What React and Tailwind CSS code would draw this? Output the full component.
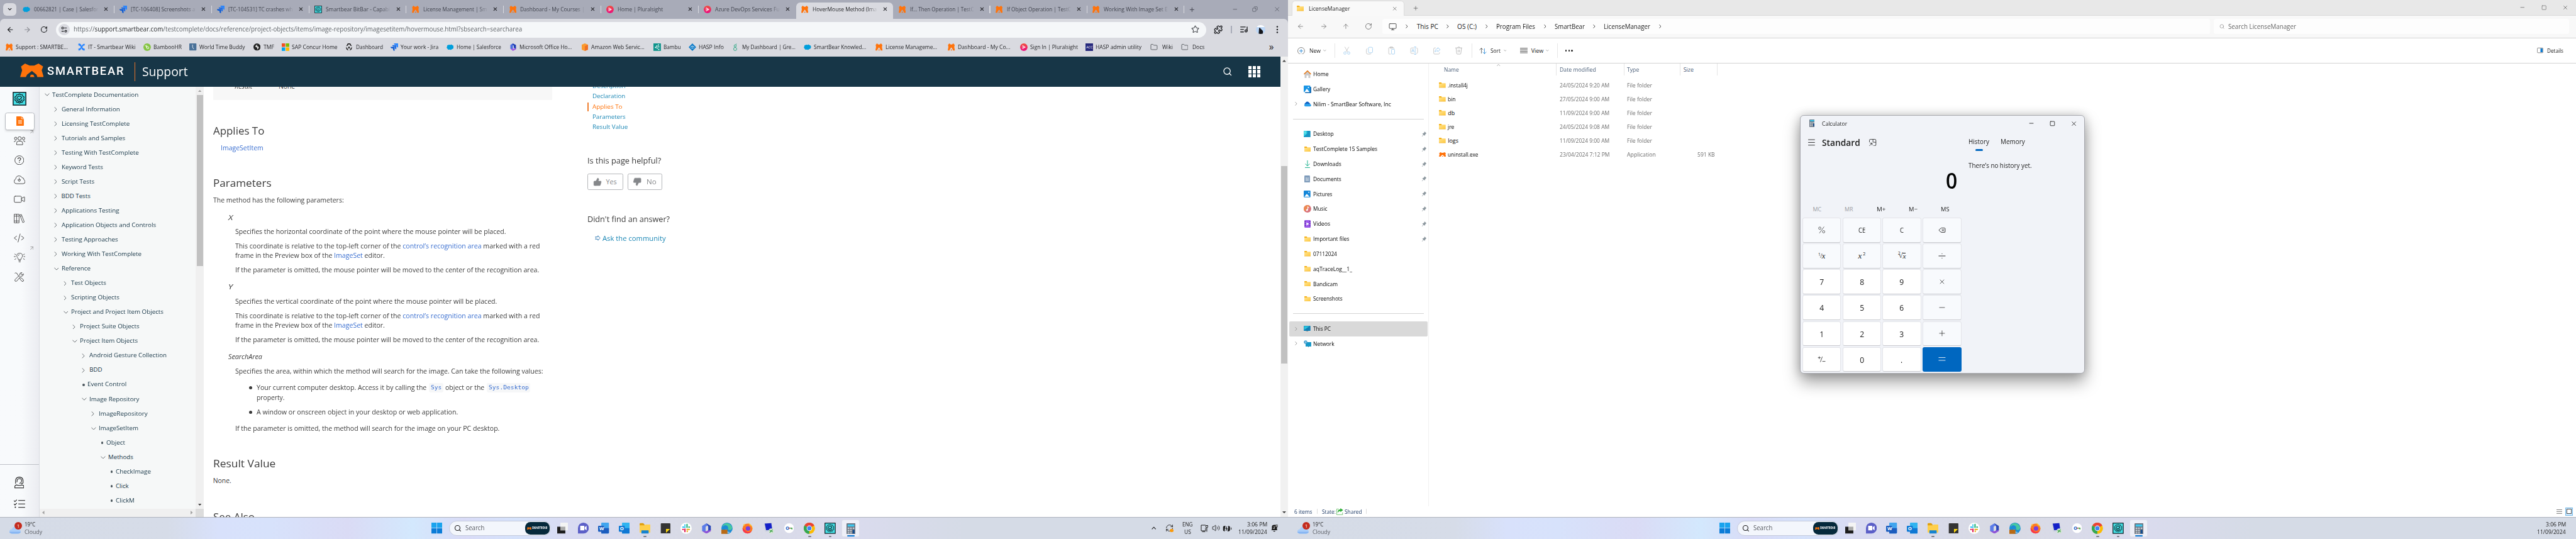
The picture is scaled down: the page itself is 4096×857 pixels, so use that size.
import React, { useLayoutEffect, useRef } from "react";
import {
  ArrowLeft, ArrowRight, ArrowUp, RotateCw, Star, Search, X, Minus, Plus, Square, Copy,
  Video, ThumbsUp, ThumbsDown, Delete, Volume2, Menu,
  Puzzle, ListMusic, Monitor, BatteryCharging, RefreshCw, Folder, ChevronUp,
} from "lucide-react";

// Single line of text squeezed or stretched to a known width.
function T({ w, className = "", children }) {
  const ref = useRef(null);
  useLayoutEffect(() => {
    const el = ref.current;
    if (el && w && el.offsetWidth) el.style.transform = `scaleX(${w / el.offsetWidth})`;
  });
  return (
    <span className={"inline-block shrink-0 whitespace-nowrap " + className} style={w ? { width: w } : undefined}>
      <span ref={ref} className="inline-block origin-left whitespace-pre">{children}</span>
    </span>
  );
}

const Svg = ({ className = "", children, vb = "0 0 24 24" }) => (
  <svg viewBox={vb} preserveAspectRatio="none" fill="none" className={"shrink-0 " + className}>{children}</svg>
);

const Bear = ({ className }) => (
  <Svg vb="69 512 82 106" className={className}>
    <path fill="#ff730b" d="M86 512l16 16h16l15-16 16 23-5 30 7 53h-22l-3-18-16-30-17 30-4 18H69l7-53-4-30zM103 618l3-18h9l4 18z" />
  </Svg>
);
const Cloud = ({ className }) => (
  <Svg className={className}>
    <path fill="#009edb" d="M6 5c2-2 5-1 6 0 2-2 5-2 7 1 4 0 5 4 4 8-1 3-4 4-6 4-2 4-6 3-7 1-3 3-6 0-7-2-3-2-3-6-1-7-1-3 1-5 4-5z" />
  </Svg>
);
const Jira = ({ className }) => (
  <Svg className={className}>
    <path fill="#2684ff" d="M11 0h13v13c-3 0-5-2-5-5V5h-3c-3 0-5-2-5-5z" />
    <path fill="#1f6fe8" d="M5.500 5.500h13v13c-3 0-5-2-5-5v-3h-3c-3 0-5-2-5-5z" />
    <path fill="#0f5bd0" d="M0 11h13v13c-3 0-5-2-5-5v-3H5c-3 0-5-2-5-5z" />
  </Svg>
);
const TC = ({ className }) => (
  <Svg className={className}>
    <rect x="1" y="1" width="22" height="22" fill="#45e0e6" stroke="#0b1a20" strokeWidth="1.600" />
    <path stroke="#0b1a20" strokeWidth="1.300" strokeLinejoin="round" d="M12 3.600l2.200 1.600 2.700-.2.900 2.500 2.300 1.500-.8 2.600.8 2.600-2.300 1.500-.9 2.500-2.700-.2-2.200 1.800-2.200-1.800-2.700.2-.9-2.500-2.300-1.500.8-2.600-.8-2.600 2.300-1.500.9-2.500 2.700.2z" />
    <path stroke="#0b1a20" strokeWidth="1.400" d="M15.600 9.200A4.600 4.600 0 1 0 16.500 13M9.500 11.800l2.300 2.200 4.400-4.400" />
  </Svg>
);
const Plural = ({ className }) => (
  <Svg className={className}>
    <defs><linearGradient id="pl" x1="0" y1="0" x2="0" y2="1"><stop stopColor="#f0503c" /><stop offset="1" stopColor="#ec0a80" /></linearGradient></defs>
    <circle cx="12" cy="12" r="12" fill="url(#pl)" />
    <path stroke="#fff" strokeWidth="1.500" d="M8 6.500l9 5.500-9 5.500zM11 9.500l4 2.500-4 2.500z" />
  </Svg>
);
const FolderIcon = ({ className }) => (
  <Svg vb="0 0 24 18" className={className}>
    <defs><linearGradient id="fo" x1="0" y1="0" x2="1" y2="1"><stop stopColor="#ffe391" /><stop offset="1" stopColor="#ffc83c" /></linearGradient></defs>
    <path fill="#f5b117" d="M0 1.500Q0 0 1.500 0H8l2.500 2.500V6H0z" />
    <path fill="url(#fo)" d="M0 5h9l2-2.500h12Q24 2.500 24 4v14H0z" />
    <path fill="#e9a21c" d="M0 17h24v1H0z" />
  </Svg>
);

const marks = {
  bear: <Bear className="size-[19px]" />,
  cloud: <Cloud className="size-5" />,
  jira: <Jira className="size-5" />,
  tc: <TC className="size-5" />,
  plural: <Plural className="size-5" />,
  conf: <Svg className="size-5"><path fill="#2684ff" d="M2 0c8 1 9 6 10 9 1-4 3-7 9-8l1 5c-6 1-7 4-8 6 1 3 4 5 8 5l-1 6c-7 0-9-5-10-8-1 3-2 7-9 8L1 17c6-1 7-3 8-5C8 8 6 7 1 6z" /></Svg>,
  bamboo: <Svg className="size-5"><circle cx="12" cy="12" r="12" fill="#84c441" /><circle cx="14" cy="14" r="3.500" stroke="#fff" strokeWidth="1.800" /><path stroke="#fff" strokeWidth="1.800" d="M10.500 14V5M5 7q4 0 5 5" /></Svg>,
  wtb: <Svg className="size-[19px]"><rect width="24" height="24" rx="2" fill="#4a7198" /><path stroke="#e8f0f8" strokeWidth="2" d="M11 4v9l4 6" /></Svg>,
  tmf: <Svg className="size-[19px]"><circle cx="12" cy="12" r="12" fill="#222" /><path fill="#ddd" d="M14 3c-6 2-10 8-5 10 3 1 5 1 3 8 7-4 8-10 3-11-4-1-4-4-1-7z" /></Svg>,
  ms: <Svg className="size-5"><path fill="#f25022" d="M0 0h11v11H0z" /><path fill="#7fba00" d="M13 0h11v11H13z" /><path fill="#00a4ef" d="M0 13h11v11H0z" /><path fill="#ffb900" d="M13 13h11v11H13z" /></Svg>,
  auth: <Svg className="size-5"><path fill="#1a1a1a" d="M8 0h8l5 9-5-2-2-4h-4L8 7 3 9zM2 11l5 5 3 7-6-4zM22 11l-5 5-3 7 6-4zM12 9l3 4-3 5-3-5z" /></Svg>,
  office: <Svg className="size-5"><path fill="#4b6ee0" d="M11 0L3 5v12l8 3V7z" /><path fill="#a05ae0" d="M3 17l8 7 10-5v-6l-7 4z" /><path fill="#203fb5" d="M11 0l10 5v12l-7-3V7L9 5z" /></Svg>,
  aws: <Svg className="size-5"><path fill="#fb9a2e" d="M12 0l10 4v16l-10 4L2 20V4z" /><path fill="#ef6f25" d="M12 9l10-5v16l-10 4z" /></Svg>,
  bambu: <Svg className="size-5"><path fill="#10948c" d="M0 0h24v24H0z" /><g fill="#fff"><circle cx="16" cy="5" r="2" /><circle cx="11" cy="9" r="2.200" /><circle cx="17" cy="11" r="2" /><circle cx="7" cy="13" r="2.200" /><circle cx="12" cy="15" r="2" /><circle cx="17" cy="19" r="2" /></g></Svg>,
  hasp: <Svg className="size-5"><path fill="#0b7ac8" d="M12 0l12 12-12 12L0 12z" /><path stroke="#fff" strokeWidth="2" d="M6 13q6-9 12 0M9 16q3-4 6 0" /></Svg>,
  gre: <Svg className="size-5"><circle cx="10" cy="8" r="3.500" stroke="#24a47f" strokeWidth="1.800" /><circle cx="10" cy="18" r="5" stroke="#24a47f" strokeWidth="1.800" /><path stroke="#24a47f" strokeWidth="1.800" d="M12 5l2-4" /></Svg>,
  acc: <div className="flex size-5 items-center justify-center bg-[#26287c] text-[9px] text-white">ACC</div>,
  folder: <Folder className="size-5 text-[#5f6368]" strokeWidth={2} />,
};

/* ---------- browser ---------- */

const tabs = [
  ["cloud", "00662821 | Case | Salesfor", 172, 260], ["jira", "[TC-106408] Screenshots a", 172, 260],
  ["jira", "[TC-104531] TC crashes wh", 172, 260], ["tc", "Smartbear BitBar - Capabi", 172, 260],
  ["bear", "License Management | Sm", 171, 260], ["bear", "Dashboard - My Courses |", 172, 260],
  ["plural", "Home | Pluralsight", 121, 260], ["plural", "Azure DevOps Services Fu", 172, 260],
  ["bear", "HoverMouse Method (Ima", 172, 260, true],
  ["bear", "If... Then Operation | TestC", 171, 259], ["bear", "If Object Operation | TestC", 171, 259], ["bear", "Working With Image Set E", 171, 259],
];

const bookmarks = [
  ["bear", "Support : SMARTBE...", 139, 193], ["conf", "IT - Smartbear Wiki", 127, 175], ["bamboo", "BambooHR", 75, 123],
  ["wtb", "World Time Buddy", 122, 171], ["tmf", "TMF", 28, 76], ["ms", "SAP Concur Home", 122, 170],
  ["auth", "Dashboard", 72, 120], ["jira", "Your work - Jira", 101, 149], ["cloud", "Home | Salesforce", 119, 168],
  ["office", "Microsoft Office Ho...", 140, 192], ["aws", "Amazon Web Servic...", 142, 193], ["bambu", "Bambu", 46, 95],
  ["hasp", "HASP Info", 67, 115], ["gre", "My Dashboard | Gre...", 143, 192], ["cloud", "SmartBear Knowled...", 140, 192],
  ["bear", "License Manageme...", 138, 193], ["bear", "Dashboard - My Co...", 140, 193], ["plural", "Sign In | Pluralsight", 127, 175],
  ["acc", "HASP admin utility", 123, 173], ["folder", "Wiki", 28, 81], ["folder", "Docs", 32, 81],
];

function TabStrip() {
  return (
    <div className="flex h-[50px] shrink-0 bg-[#a8abb8]">
      <div className="ml-2 mr-[3px] mt-2 flex h-[34px] w-[35px] items-center justify-center rounded-[10px] bg-[#d9dae0]">
        <Svg className="size-3"><path stroke="#1f2023" strokeWidth="4" d="M3 7l9 9 9-9" /></Svg>
      </div>
      {tabs.map(([icon, label, w, width, active], i) => (
        <div key={i} style={{ width }} className={"flex shrink-0 items-center " + (active ? "mt-[7px] h-[43px] rounded-t-[11px] bg-[#d9dae0] pb-[7px] text-[#1f2023]" : "h-[50px] text-[#42454f]")}>
          <span className="ml-[14px] flex w-[30px] shrink-0">{marks[icon]}</span>
          <span className="w-[174px] shrink-0 overflow-hidden [mask-image:linear-gradient(to_right,#000_85%,transparent)]"><T w={w} className="text-[15px]">{label}</T></span>
          <X className="ml-[12px] size-[15px] text-[#26272c]" strokeWidth={3} />
          <span className={"ml-auto h-5 w-[2px] " + (active || i === 7 ? "" : "bg-[#d9dae0]")} />
        </div>
      ))}
      <div className="flex flex-1 items-center text-[#3c3f48]">
        <Plus className="ml-[11px] size-[18px]" strokeWidth={2} />
        <Minus className="ml-[98px] size-4" strokeWidth={1.500} />
        <Copy className="ml-[39px] size-[15px] -scale-x-100" strokeWidth={1.500} />
        <X className="ml-[41px] size-[19px]" strokeWidth={1.300} />
      </div>
    </div>
  );
}

function AddressRow() {
  return (
    <div className="bg-[#a8abb8]">
      <div className="flex h-[58px] items-center rounded-t-[11px] bg-[#d9dae0] text-[#1f2023]">
        <ArrowLeft className="ml-[17px] size-[21px]" strokeWidth={2.300} />
        <ArrowRight className="ml-[24px] size-[21px] text-[#8d8f96]" strokeWidth={2.300} />
        <RotateCw className="ml-[24px] size-[20px]" strokeWidth={2.300} />
        <div className="ml-[23px] flex h-[42px] w-[3072px] items-center rounded-full bg-[#f5f7f9]">
          <div className="ml-[6px] flex size-[30px] items-center justify-center rounded-full bg-[#d9dae0]">
            <Svg className="size-[17px]"><g stroke="#1f2023" strokeWidth="2.600"><circle cx="6" cy="6" r="3.500" /><path d="M12 6h10M2 18h9" /><circle cx="18" cy="18" r="3.500" /></g></Svg>
          </div>
          <T w={1198} className="ml-[11px] text-[17.500px] text-[#5f6368]">https://<span className="text-[#1f2023]">support.smartbear.com</span>/testcomplete/docs/reference/project-objects/items/image-repository/imagesetitem/hovermouse.html?sbsearch=searcharea</T>
          <Star className="ml-auto mr-[19px] size-[22px] text-[#4a4d52]" strokeWidth={2} />
        </div>
        <Puzzle className="ml-[20px] size-[24px]" strokeWidth={2.300} />
        <span className="ml-[22px] h-5 w-[2px] bg-[#a8abb8]" />
        <ListMusic className="ml-[21px] size-[23px]" strokeWidth={2.500} />
        <div className="ml-[21px] size-[25px] overflow-hidden rounded-full bg-[#bcd7f7]"><Svg className="size-[25px]"><path fill="#fff" d="M0 0h24v5H0z" /><path fill="#15161a" d="M8 9q1-5 4 0l6 6v9H7z" /></Svg></div>
        <Svg className="ml-[21px] h-[20px] w-[20px]"><g fill="#1f2023"><circle cx="12" cy="3" r="2.500" /><circle cx="12" cy="12" r="2.500" /><circle cx="12" cy="21" r="2.500" /></g></Svg>
      </div>
    </div>
  );
}

function Bookmarks() {
  return (
    <div className="flex h-[43px] items-center bg-[#d9dae0] pl-[15px] pb-[7px] text-[15px] text-[#1f2023]">
      {bookmarks.map(([icon, label, w, width], i) => (
        <div key={i} style={{ width }} className="flex shrink-0 items-center">
          <span className={"flex shrink-0 " + (icon === "folder" ? "w-[31px]" : "w-[27px]")}>{marks[icon]}</span>
          <T w={w}>{label}</T>
        </div>
      ))}
      <span className="ml-auto mr-[38px] text-[26px] leading-none">»</span>
    </div>
  );
}

function SiteHeader() {
  return (
    <div className="flex h-[81px] items-center bg-[#173647]">
      <Bear className="-mt-[7px] ml-[53px] h-[36px] w-[63px]" />
      <T w={207} className="ml-[10px] font-['Roboto'] text-[31px] font-medium tracking-[3px] text-white">SMARTBEAR</T>
      <span className="ml-[26px] h-[50px] w-[3px] bg-[#e9742a]" />
      <T w={122} className="ml-[18px] text-[32px] text-white">Support</T>
      <Search className="ml-auto size-[26px] text-white" strokeWidth={2} />
      <div className="ml-[44px] mr-[53px] grid grid-cols-3 gap-[3px]">
        {Array.from({ length: 9 }, (_, i) => <span key={i} className="size-[8.500px] bg-white" />)}
      </div>
    </div>
  );
}

const Out = () => <Svg className="absolute right-[14px] top-[-3px] size-[9px]"><path stroke="#444" strokeWidth="2.200" d="M2 2h20v20M22 2L2 22" /></Svg>;
const RailItem = ({ out, children }) => <div className="relative flex h-[52px] items-center justify-center">{out && <Out />}{children}</div>;

function Rail() {
  return (
    <div className="flex w-[105px] shrink-0 flex-col border-r border-[#d9dce2] bg-linear-to-r from-[#f8fafc] from-55% to-[#ebecf1] text-[#3a3a3a]">
      <TC className="ml-[34px] mt-[13px] size-[37px]" />
      <div className="ml-[13px] mt-[19px] flex h-[46px] w-[80px] items-center justify-center rounded-md border border-[#b9bcc2] bg-white shadow-md">
        <Svg vb="0 0 20 25" className="h-[25px] w-[20px]"><path fill="#ff730b" d="M0 1q0-1 1-1h12v7h7v17q0 1-1 1H1q-1 0-1-1z" /><path fill="#ff730b" d="M14 0l6 6h-6z" /><path stroke="#fff" strokeWidth="1.600" d="M5 11.500h10M5 15h10M5 18.500h10" /></Svg>
      </div>
      <div className="mt-[3px] flex flex-col">
        <RailItem out>
          <Svg vb="0 0 31 22" className="h-[23px] w-[31px]"><g stroke="#3a3a3a" strokeWidth="1.500"><circle cx="15.500" cy="5" r="4.500" /><circle cx="5" cy="5" r="3.300" /><circle cx="26" cy="5" r="3.300" /><path d="M7.500 21v-4q0-5 5-5h6q5 0 5 5v4zM.8 14.500Q1 11 6 11M30.200 14.500Q30 11 25 11" /></g></Svg>
        </RailItem>
        <RailItem><Svg className="size-[26px]"><circle cx="12" cy="12" r="11" stroke="#3a3a3a" strokeWidth="1.400" /><path stroke="#3a3a3a" strokeWidth="1.800" d="M8.500 9.500q0-3.500 3.500-3.500t3.500 3q0 1.800-1.800 2.800T12 14.500M12 16.500v2" /></Svg></RailItem>
        <RailItem><Svg vb="0 0 31 23" className="h-[23px] w-[31px]"><path stroke="#3a3a3a" strokeWidth="1.500" d="M8 22Q1 22 1 15.500 1 11 5 9.500 6 1 14 1q6 0 8 5 5 0 5 5.500 3 1.500 3 5 0 5.500-5 5.500z" /><path stroke="#3a3a3a" strokeWidth="1.500" d="M14.500 6v6M10.500 11.500h8l-4 5z" /></Svg></RailItem>
        <RailItem><Video className="size-[33px]" strokeWidth={1.100} /></RailItem>
        <RailItem><Svg vb="0 0 29 25" className="h-[25px] w-[29px]"><g stroke="#3a3a3a" strokeWidth="1.400"><path d="M1 1h13v23H1zM7.500 1v23M1 6h13M1 19h13M16 3l4-1.500 8 20-4 2zM17.500 7l4-1.500" /></g></Svg></RailItem>
        <RailItem><Svg vb="0 0 28 25" className="h-[25px] w-[28px]"><path stroke="#3a3a3a" strokeWidth="1.500" d="M8 7l-7 5.500L8 18M20 7l7 5.500L20 18M17 1l-6 23" /></Svg></RailItem>
        <RailItem out><Svg vb="0 0 31 25" className="h-[25px] w-[31px]"><g stroke="#3a3a3a" strokeWidth="1.400"><path d="M12 18q0-3-2-5-2-2-2-5 0-7 7.500-7T23 8q0 3-2 5t-2 5zM12.500 21h6M13 24h5M0 10h5M26 10h5M2 3l4 2.500M29 3l-4 2.500M2 18l4-2.500M29 18l-4-2.500M12 8q0-3 3-3.500" /></g></Svg></RailItem>
        <RailItem><Svg vb="0 0 26 25" className="h-[25px] w-[26px]"><g stroke="#3a3a3a" strokeWidth="1.500"><path d="M1 3l2-2 5 3 .5 3 5 5M16 15l1-1 7 6q1 2-.5 3.500T20 24l-6-7zM24 4l-4 3-3-3 3-3q-6-1-6 6L2 19q-2 3 0 4.500t4 0l11-13q7 0 7-6.500z" /></g></Svg></RailItem>
      </div>
      <div className="mt-auto flex h-[140px] flex-col items-center border-t border-[#bfc2c8] pt-[32px]">
        <Svg vb="0 0 26 30" className="h-[31px] w-[26px]"><g stroke="#111" strokeWidth="1.700"><path d="M3 18V11Q3 1 13 1t10 10v5q-2 2-6 2" /><path d="M7 14q-1-9 6-9t6 6-6 6M1 29v-3q0-5 5-5 7 3 14 0 5 0 5 5v3z" /></g></Svg>
        <Svg vb="0 0 30 24" className="mt-[29px] h-[24px] w-[30px]"><path stroke="#111" strokeWidth="1.700" d="M12 3h18M12 12h18M12 21.500h18M0 3l3 3 5-5M0 12l3 3 5-5" /><circle cx="4" cy="21" r="1.800" fill="#111" /></Svg>
      </div>
    </div>
  );
}

const tree = [
  [0, "v", "TestComplete Documentation", 230], [1, ">", "General Information", 156], [1, ">", "Licensing TestComplete", 182],
  [1, ">", "Tutorials and Samples", 170], [1, ">", "Testing With TestComplete", 206], [1, ">", "Keyword Tests", 111],
  [1, ">", "Script Tests", 88], [1, ">", "BDD Tests", 78], [1, ">", "Applications Testing", 154],
  [1, ">", "Application Objects and Controls", 252], [1, ">", "Testing Approaches", 151], [1, ">", "Working With TestComplete", 214],
  [1, "v", "Reference", 77], [2, ">", "Test Objects", 94], [2, ">", "Scripting Objects", 129], [2, "v", "Project and Project Item Objects", 247],
  [3, ">", "Project Suite Objects", 159], [3, "v", "Project Item Objects", 155], [4, ">", "Android Gesture Collection", 207],
  [4, ">", "BDD", 34], [4, ".", "Event Control", 104], [4, "v", "Image Repository", 134], [5, ">", "ImageRepository", 130],
  [5, "v", "ImageSetItem", 106], [6, ".", "Object", 50], [6, "v", "Methods", 67], [7, ".", "CheckImage", 94], [7, ".", "Click", 35], [7, ".", "ClickM", 50],
];
const indents = ["pl-[14px]", "pl-[39px]", "pl-[64px]", "pl-[89px]", "pl-[114px]", "pl-[139px]", "pl-[164px]", "pl-[189px]"];

function Tree() {
  return (
    <div className="flex w-[439px] shrink-0 flex-col bg-[#f6f8f8]">
      <div className="flex min-h-0 flex-1">
        <div className="flex-1 overflow-hidden pt-[2px]">
          {tree.map(([d, k, label, w], i) => (
            <div key={i} className={"flex h-[38.730px] items-center text-[16.250px] text-[#173647] " + indents[d]}>
              <span className={"flex shrink-0 " + (k === "." ? "w-[15px]" : "w-[20px]")}>
                {k === "v" && <Svg className="h-[8px] w-[13px]"><path stroke="#444b50" strokeWidth="3" d="M1 3l11 18L23 3" /></Svg>}
                {k === ">" && <Svg className="h-[13px] w-[8px]"><path stroke="#444b50" strokeWidth="3" d="M3 1l18 11L3 23" /></Svg>}
                {k === "." && <span className="ml-px size-[6px] rounded-full bg-[#4a555c]" />}
              </span>
              <T w={w}>{label}</T>
            </div>
          ))}
        </div>
        <div className="flex w-[21px] flex-col items-center bg-[#f0f0f0] py-[8px]">
          <Svg className="h-[5px] w-[9px]"><path fill="#a3a3a3" d="M0 24L12 0l12 24z" /></Svg>
          <span className="mt-[8px] h-[457px] w-[17px] bg-[#c1c1c1]" />
          <Svg className="mt-auto h-[5px] w-[9px]"><path fill="#444" d="M0 0l12 24L24 0z" /></Svg>
        </div>
      </div>
      <div className="flex h-[21px] items-center bg-[#f0f0f0] pl-[8px]">
        <Svg className="h-[10px] w-[6px]"><path fill="#a3a3a3" d="M24 0L0 12l24 12z" /></Svg>
        <Svg className="ml-auto mr-[8px] h-[10px] w-[6px]"><path fill="#a3a3a3" d="M0 0l24 12L0 24z" /></Svg>
        <span className="h-full w-[21px] bg-[#dcdcdc]" />
      </div>
    </div>
  );
}

const L = ({ className = "", children }) => <div className={"flex h-[26px] items-center " + className}>{children}</div>;
const H = ({ w, className = "", children }) => <div className={"flex h-[40px] items-center text-[28px] text-[#3b3b3b] " + className}><T w={w}>{children}</T></div>;
const A = ({ children }) => <span className="text-[#3a6fd0]">{children}</span>;
const Bullet = () => <span className="ml-[96px] mr-[12px] size-[8px] shrink-0 rounded-full bg-[#3b3b3b]" />;

function Coordinate({ name, w, dir }) {
  return (
    <>
      <L className="mt-[20px] pl-[40px] italic"><T w={12}>{name}</T></L>
      <L className="mt-[12px] pl-[60px]"><T w={w}>Specifies the {dir} coordinate of the point where the mouse pointer will be placed.</T></L>
      <L className="mt-[13px] pl-[60px]"><T w={814}>This coordinate is relative to the top-left corner of the <A>control’s recognition area</A> marked with a red</T></L>
      <L className="-mt-px pl-[60px]"><T w={400}>frame in the Preview box of the <A>ImageSet</A> editor.</T></L>
      <L className="mt-[12px] pl-[60px]"><T w={812}>If the parameter is omitted, the mouse pointer will be moved to the center of the recognition area.</T></L>
    </>
  );
}

function Article() {
  return (
    <div className="ml-[25px] w-[906px] shrink-0 overflow-hidden text-[17.500px] text-[#3b3b3b]">
      <div className="h-[35px] overflow-hidden bg-[#f7f7f7]">
        <L className="-mt-[14px] pl-[57px]"><T w={48} className="italic">Result</T><T w={44} className="ml-[70px]">None</T></L>
      </div>
      <H w={137} className="mt-[61px]">Applies To</H>
      <L className="mt-[15px] pl-[20px]"><T w={114}><A>ImageSetItem</A></T></L>
      <H w={155} className="mt-[59px]">Parameters</H>
      <L className="mt-[15px]"><T w={349}>The method has the following parameters:</T></L>
      <Coordinate name="X" w={723} dir="horizontal" />
      <Coordinate name="Y" w={699} dir="vertical" />
      <L className="mt-[20px] pl-[40px] italic"><T w={91}>SearchArea</T></L>
      <L className="mt-[12px] pl-[60px]"><T w={822}>Specifies the area, within which the method will search for the image. Can take the following values:</T></L>
      <L className="mt-[18px]">
        <Bullet />
        <T w={454}>Your current computer desktop. Access it by calling the</T>
        <span className="ml-[6px] mt-px flex h-[25px] w-[39px] items-center justify-center rounded bg-[#f6f7f8] font-['DejaVu_Sans_Mono'] text-[15px] text-[#3a6fd0]"><T w={29}>Sys</T></span>
        <T w={105} className="ml-[5px]">object or the</T>
        <span className="ml-[7px] mt-px flex h-[25px] w-[116px] items-center justify-center rounded bg-[#f6f7f8] font-['DejaVu_Sans_Mono'] text-[15px] text-[#3a6fd0]"><T w={107}>Sys.Desktop</T></span>
      </L>
      <L className="mt-px pl-[116px]"><T w={75}>property.</T></L>
      <L className="mt-[13px]"><Bullet /><T w={538}>A window or onscreen object in your desktop or web application.</T></L>
      <L className="mt-[18px] pl-[60px]"><T w={706}>If the parameter is omitted, the method will search for the image on your PC desktop.</T></L>
      <H w={167} className="mt-[59px]">Result Value</H>
      <L className="mt-[15px]"><T w={49}>None.</T></L>
      <H w={111} className="mt-[61px]">See Also</H>
    </div>
  );
}

function Aside() {
  return (
    <div className="ml-[94px] w-[400px] overflow-hidden text-[#3b3b3b]">
      <div className="-mt-[15px] flex flex-col text-[16px] text-[#1b87b5]">
        {[["Description", 88], ["Declaration", 88], ["Applies To", 80], ["Parameters", 89], ["Result Value", 94]].map(([t, w], i) => (
          <div key={t} className="flex h-[27.400px] items-center">
            <span className={"mr-[11px] h-[23px] w-[3px] " + (i === 2 ? "bg-[#f08030]" : "")} />
            <T w={w} className={i === 2 ? "text-[#ff730b]" : ""}>{t}</T>
          </div>
        ))}
      </div>
      <div className="mt-[61px] flex h-[30px] items-center text-[20.500px]"><T w={197}>Is this page helpful?</T></div>
      <div className="mt-[19px] flex h-[43px] gap-[12px] text-[18px] text-[#85878a]">
        <div className="flex w-[95px] items-center rounded-[4px] border border-[#b5b7ba]"><ThumbsUp className="ml-[13px] mr-[11px] size-[24px] fill-[#85878a]" strokeWidth={1} /><T w={29}>Yes</T></div>
        <div className="flex w-[92px] items-center rounded-[4px] border border-[#b5b7ba]"><ThumbsDown className="ml-[13px] mr-[13px] size-[24px] fill-[#85878a]" strokeWidth={1} /><T w={26}>No</T></div>
      </div>
      <div className="mt-[65px] flex h-[30px] items-center text-[20.500px]"><T w={220}>Didn't find an answer?</T></div>
      <div className="mt-[19px] flex h-[30px] items-center pl-[20px] text-[18px] text-[#1b87b5]">
        <Svg className="mr-[5px] size-[15px]"><path stroke="#3b7fb5" strokeWidth="2.500" d="M2 7h11V2l9 10-9 10v-5H2q6-4 0-10z" /></Svg>
        <T w={169}>Ask the community</T>
      </div>
    </div>
  );
}

function Browser() {
  return (
    <div className="flex h-[1380px] w-[3440px] flex-col overflow-hidden bg-white">
      <TabStrip />
      <AddressRow />
      <Bookmarks />
      <div className="flex min-h-0 flex-1">
        <div className="flex min-w-0 flex-1 flex-col">
          <SiteHeader />
          <div className="flex min-h-0 flex-1"><Rail /><Tree /><Article /><Aside /></div>
        </div>
        <div className="flex w-[21px] flex-col items-center bg-[#f1f1f1] py-[9px]">
          <Svg className="h-[6px] w-[10px]"><path fill="#505050" d="M0 24L12 0l12 24z" /></Svg>
          <span className="mt-[277px] h-[528px] w-[17px] bg-[#c1c1c1]" />
          <Svg className="mt-auto h-[6px] w-[10px]"><path fill="#505050" d="M0 0l12 24L24 0z" /></Svg>
        </div>
      </div>
    </div>
  );
}

/* ---------- file explorer ---------- */

const Chev = ({ className = "" }) => <Svg className={"h-[10px] w-[6px] " + className}><path stroke="currentColor" strokeWidth="4" d="M3 1l18 11L3 23" /></Svg>;
const Down = ({ className = "" }) => <Svg className={"h-[4px] w-[8px] " + className}><path stroke="#777" strokeWidth="4" d="M1 2l11 18L23 2" /></Svg>;

const crumbs = [["This PC", 57, 108], ["OS (C:)", 52, 104], ["Program Files", 104, 156], ["SmartBear", 80, 132], ["LicenseManager", 124, 177]];

const placeIcons = {
  folder: <FolderIcon className="ml-px h-[14px] w-[18px]" />,
  home: <Svg className="size-5"><path fill="#c9c9cb" d="M3 10l9-9 9 9v14h-6v-8H9v8H3z" /><path stroke="#e8740c" strokeWidth="3" d="M1 12L12 1.500 23 12" /></Svg>,
  gallery: <Svg className="size-5"><rect x="4" y="4" width="20" height="20" rx="2" fill="#0f5fa8" /><rect width="21" height="21" rx="2" fill="#1b96e6" /><path fill="#fff" d="M2 21L10 10l9 11z" /><circle cx="15" cy="6" r="2" fill="#fff" /></Svg>,
  drive: <Svg className="h-[14px] w-5"><path fill="#0f62c4" d="M6 16Q0 14 5 8 10-3 16 4q4 5 6 9z" /><path fill="#2aa0ea" d="M3 22Q-1 16 6 13q6-4 10 0 8 0 8 6 0 5-4 5H5z" /></Svg>,
  desktop: <Svg className="size-[18px]"><rect width="24" height="24" rx="2" fill="#1795c4" /><path fill="#35d2e2" d="M0 0h12v10L0 20z" /><path stroke="#fff" strokeWidth="2" d="M3 4h3M3 8h3" /></Svg>,
  downloads: <Svg className="size-5"><path stroke="#18b08c" strokeWidth="2" d="M12 0v17M5 11l7 7 7-7M4 23h16" /></Svg>,
  documents: <Svg className="ml-[2px] h-5 w-[15px]"><rect width="24" height="24" rx="3" fill="#7f9cbb" /><path stroke="#fff" strokeWidth="1.800" d="M5 8h8M5 12h14M5 16h14M15 8h4" /></Svg>,
  pictures: <Svg className="size-[18px]"><rect width="24" height="24" rx="2" fill="#1587d8" /><path fill="#fff" d="M2 22l9-10 10 10z" /><circle cx="18" cy="6" r="2" fill="#fff" /></Svg>,
  music: <Svg className="size-5"><circle cx="12" cy="12" r="12" fill="#d9737a" /><path fill="#ec8a55" d="M12 0A12 12 0 0 0 3 20L20 3Q17 0 12 0z" /><path stroke="#fff" strokeWidth="2" d="M13 16V5q0 4 4 4" /><circle cx="10.500" cy="16" r="3" fill="#fff" /></Svg>,
  videos: <Svg className="ml-px h-[20px] w-[17px]"><rect width="24" height="24" rx="3" fill="#9a55ea" /><path stroke="#43217c" strokeWidth="2.500" strokeDasharray="3 3" d="M3 3v19M21 3v19" /><path fill="#fff" d="M8 7l10 5-10 5z" /></Svg>,
  pc: <Svg className="h-[16px] w-[18px]"><rect width="24" height="20" rx="1" fill="#127fb5" /><path fill="#2cc4dd" d="M1 1h20L1 17z" /><path fill="#555" d="M7 22h10v2H7zM11 20h2v2h-2z" /></Svg>,
  network: <Svg className="size-5"><rect x="6" y="6" width="18" height="14" fill="#1598c8" /><circle cx="6" cy="6" r="5.500" fill="#4a9fcf" /><path fill="#aadcf0" d="M5 2l4 4-4 4z" /><path fill="#777" d="M10 22h9v2h-9zM14 20h2v2h-2z" /></Svg>,
};

const places = [
  ["home", "Home", 41], ["gallery", "Gallery", 46], ["drive", "Nilim - SmartBear Software, Inc", 208, ">"], null,
  ["desktop", "Desktop", 55, "p"], ["folder", "TestComplete 15 Samples", 171, "p"], ["downloads", "Downloads", 75, "p"],
  ["documents", "Documents", 75, "p"], ["pictures", "Pictures", 51, "p"], ["music", "Music", 38, "p"], ["videos", "Videos", 45, "p"],
  ["folder", "Important files", 97, "p"], ["folder", "07112024", 64], ["folder", "aqTraceLog__1_", 104], ["folder", "Bandicam", 66],
  ["folder", "Screenshots", 78], null, ["pc", "This PC", 47, ">", true], ["network", "Network", 57, ">"],
];

const files = [
  [".install4j", 54, "24/05/2024 9:20 AM", "File folder", ""], ["bin", 21, "27/05/2024 9:00 AM", "File folder", ""],
  ["db", 18, "11/09/2024 9:00 AM", "File folder", ""], ["jre", 17, "24/05/2024 9:08 AM", "File folder", ""],
  ["logs", 28, "11/09/2024 9:00 AM", "File folder", ""], ["uninstall.exe", 81, "23/04/2024 7:12 PM", "Application", "591 KB"],
];

function Explorer() {
  return (
    <div className="flex h-[1380px] w-[3440px] flex-col overflow-hidden bg-white text-[15px] text-[#1b1b1b]">
      <div className="flex h-[42px] shrink-0 items-end border-b border-[#dadada] bg-[#e8e8e8]">
        <div className="-mb-px ml-[10px] flex h-[39px] w-[301px] items-center rounded-t-[9px] border border-b-0 border-[#dcdcdc] bg-[#f9f9f9]">
          <FolderIcon className="ml-[12px] h-[14px] w-[19px]" />
          <T w={110} className="ml-[13px]">LicenseManager</T>
          <X className="ml-[111px] size-[16px] text-[#444]" strokeWidth={1.500} />
        </div>
        <Plus className="mb-[10px] ml-[21px] size-[17px] text-[#444]" strokeWidth={1.500} />
        <Minus className="mb-[12px] ml-auto size-[16px] text-[#444]" strokeWidth={1.500} />
        <Square className="mb-[13px] ml-[42px] size-[14px] text-[#444]" strokeWidth={1.500} />
        <X className="mb-[11px] ml-[42px] mr-[20px] size-[17px] text-[#444]" strokeWidth={1.500} />
      </div>
      <div className="flex h-[60px] shrink-0 items-center border-b border-[#d4d4d4] bg-[#f8f8f8] text-[17px] text-[#1b1b1b]">
        <ArrowLeft className="ml-[24px] size-[20px] text-[#666]" strokeWidth={1.500} />
        <ArrowRight className="ml-[41px] size-[20px] text-[#666]" strokeWidth={1.500} />
        <ArrowUp className="ml-[39px] size-[20px] text-[#666]" strokeWidth={1.500} />
        <RotateCw className="ml-[41px] size-[20px] text-[#555]" strokeWidth={1.500} />
        <div className="ml-[27px] flex h-[40px] w-[2210px] items-center rounded-md bg-[#fdfdfd]">
          <Monitor className="ml-[17px] size-[22px] text-[#444]" strokeWidth={1.700} />
          <Chev className="ml-[23px] mr-[24px]" />
          {crumbs.map(([t, w, width]) => (
            <div key={t} style={{ width }} className="flex items-center"><T w={w}>{t}</T><Chev className="ml-[23px]" /></div>
          ))}
        </div>
        <div className="ml-[10px] flex h-[40px] w-[950px] items-center rounded-md bg-[#fdfdfd] text-[#666]">
          <Search className="ml-[16px] size-[14px]" strokeWidth={1.500} />
          <T w={181} className="ml-[9px]">Search LicenseManager</T>
        </div>
      </div>
      <div className="flex h-[68px] shrink-0 items-center border-b border-[#d4d4d4]">
        <Svg className="ml-[26px] size-[20px]"><circle cx="12" cy="12" r="11" stroke="#555" strokeWidth="1.400" /><path stroke="#0a78d0" strokeWidth="1.600" d="M12 6v12M6 12h12" /></Svg>
        <T w={30} className="ml-[11px]">New</T><Down className="ml-[7px]" />
        <span className="ml-[22px] h-[40px] w-px bg-[#e6e6e6]" />
        <div className="ml-[21px] flex items-center gap-[38px] text-[#b9bcc0]">
          <Svg className="size-[22px]"><path stroke="#b5b5b5" strokeWidth="1.300" d="M6 1l9 15M18 1L9 16" /><circle cx="6.500" cy="19" r="3.500" stroke="#8ec3ee" strokeWidth="1.300" /><circle cx="17.500" cy="19" r="3.500" stroke="#8ec3ee" strokeWidth="1.300" /></Svg>
          <Svg className="size-[22px]"><rect x="9" y="2" width="12" height="16" rx="3" stroke="#8ec3ee" strokeWidth="1.300" /><path stroke="#b5b5b5" strokeWidth="1.300" d="M6 6Q3 7 3 10v8q0 4 4 4h6q3 0 4-2" /></Svg>
          <Svg className="size-[22px]"><path stroke="#b5b5b5" strokeWidth="1.300" d="M10 22H6q-2 0-2-2V5q0-2 2-2h11q2 0 2 2v2M8 1h7v4H8z" /><rect x="12" y="8" width="9" height="14" rx="2" stroke="#8ec3ee" strokeWidth="1.300" /></Svg>
          <Svg className="size-[22px]"><path stroke="#b5b5b5" strokeWidth="1.300" d="M12 20H5q-3 0-3-3V7q0-3 3-3h7M18 4q4 0 4 3v10q0 3-4 3" /><path stroke="#8ec3ee" strokeWidth="1.300" d="M15 1v22M12 1h6M12 23h6M5 16l3.500-9 3.500 9M6 13h5" /></Svg>
          <Svg className="size-[22px]"><path stroke="#b5b5b5" strokeWidth="1.300" d="M9 4H6Q3 4 3 7v12q0 3 3 3h11q3 0 3-3v-2" /><path stroke="#8ec3ee" strokeWidth="1.300" d="M15 3l7 6-7 6v-3q-6 0-8 4 0-9 8-10z" /></Svg>
          <Svg className="size-[22px]"><path stroke="#a5a5a5" strokeWidth="1.300" d="M2 4h20M9 4q0-3 3-3t3 3M4 4l2 16q0 2 2 2h8q2 0 2-2l2-16M10 9v8M14 9v8" /></Svg>
        </div>
        <span className="ml-[23px] h-[40px] w-px bg-[#e6e6e6]" />
        <Svg className="ml-[19px] size-[20px]"><path stroke="#444" strokeWidth="1.500" d="M7 20V3M1 9l6-6 6 6" /><path stroke="#0a78d0" strokeWidth="1.500" d="M17 4v17M11 15l6 6 6-6" /></Svg>
        <T w={27} className="ml-[10px]">Sort</T><Down className="ml-[8px]" />
        <Svg className="ml-[36px] h-[14px] w-[20px]"><path stroke="#333" strokeWidth="2" d="M0 2h24M0 9h24M0 16h24M0 23h24" /></Svg>
        <T w={33} className="ml-[10px]">View</T><Down className="ml-[6px]" />
        <span className="ml-[22px] h-[40px] w-px bg-[#e6e6e6]" />
        <span className="ml-[21px] flex gap-[4px]"><i className="size-[4px] rounded-full bg-[#222]" /><i className="size-[4px] rounded-full bg-[#222]" /><i className="size-[4px] rounded-full bg-[#222]" /></span>
        <Svg className="ml-auto size-[17px]"><rect x="1" y="3" width="22" height="18" rx="3" stroke="#444" strokeWidth="1.500" /><path fill="#0a78d0" d="M13 5h8v14h-8z" /></Svg>
        <T w={44} className="ml-[9px] mr-[34px]">Details</T>
      </div>
      <div className="flex min-h-0 flex-1">
        <div className="flex w-[377px] shrink-0 flex-col border-r border-[#f0f0f0] pt-[8px] text-black">
          {places.map((p, i) => p ? (
            <div key={i} className={"ml-[3px] mr-[2px] flex h-[40px] shrink-0 items-center rounded-[3px] " + (p[4] ? "bg-[#d9d9d9]" : "")}>
              <span className="ml-[16px] w-[23px] shrink-0 text-[#888]">{p[3] === ">" && <Chev />}</span>
              <span className="flex w-[26px] shrink-0">{placeIcons[p[0]]}</span>
              <T w={p[2]}>{p[1]}</T>
              {p[3] === "p" && <Svg className="ml-auto mr-[3px] size-[14px]"><path fill="#8c979e" d="M14 0l10 9-3 1-4 5-1 5-5-4-8 8-1-1 7-8-5-5 5-1 5-5z" /></Svg>}
            </div>
          ) : <div key={i} className="mx-[13px] flex h-[40px] shrink-0 items-center"><span className="h-[2px] w-full bg-[#d4d4d4]" /></div>)}
        </div>
        <div className="flex flex-col">
          <div className="flex h-[32px] items-center text-[#4c607a]">
            <div className="flex h-full w-[341px] items-center border-r border-[#e5e5e5] pl-[39px]">
              <T w={40}>Name</T>
              <Svg className="mb-[24px] ml-[102px] h-[5px] w-[9px]"><path stroke="#666" strokeWidth="3" d="M1 23L12 3l11 20" /></Svg>
            </div>
            <div className="flex h-full w-[180px] items-center border-r border-[#e5e5e5] pl-[8px]"><T w={97}>Date modified</T></div>
            <div className="flex h-full w-[150px] items-center border-r border-[#e5e5e5] pl-[8px]"><T w={32}>Type</T></div>
            <div className="flex h-full w-[100px] items-center border-r border-[#e5e5e5] pl-[8px]"><T w={27}>Size</T></div>
          </div>
          <div className="mt-[7px] flex flex-col">
            {files.map(([n, w, d, t, s]) => (
              <div key={n} className="flex h-[37px] items-center text-[#6d6d6d]">
                <div className="flex w-[349px] items-center pl-[26px] text-black">
                  <span className="flex w-[24px]">{t === "Application" ? <Bear className="h-[12px] w-[19px]" /> : <FolderIcon className="h-[14px] w-[18px]" />}</span>
                  <T w={w}>{n}</T>
                </div>
                <div className="w-[180px]"><T w={133}>{d}</T></div>
                <div className="w-[187px]"><T w={t === "Application" ? 77 : 67}>{t}</T></div>
                {s && <T w={46}>{s}</T>}
              </div>
            ))}
          </div>
        </div>
      </div>
      <div className="flex h-[28px] shrink-0 items-center text-[#1e3a66]">
        <T w={48} className="ml-[17px]">6 items</T>
        <span className="ml-[12px] h-[13px] w-px bg-[#ddd]" />
        <T w={37} className="ml-[12px]">State:</T>
        <Svg className="ml-[3px] size-[18px]"><path stroke="#3aa83a" strokeWidth="1.500" d="M8 3H1v20h21v-8" /><path fill="#2fae38" d="M14 0l10 7-10 7v-4q-6 0-10 6Q4 5 14 4z" /></Svg>
        <T w={46} className="ml-[4px]">Shared</T>
        <span className="ml-[11px] h-[13px] w-px bg-[#ddd]" />
        <Svg className="ml-auto size-[15px]"><path stroke="#555" strokeWidth="2" d="M0 4h24M0 12h24M0 20h24" /></Svg>
        <span className="ml-[8px] mr-[8px] flex size-[21px] items-center justify-center border border-[#77b9e6] bg-[#cce8ff]"><span className="size-[13px] border border-[#555] bg-white" /></span>
      </div>
    </div>
  );
}

/* ---------- calculator ---------- */

const op = { fill: "none", stroke: "#1b1b1b", strokeWidth: 1.400 };
const keys = [
  [<svg viewBox="0 0 24 24" className="size-[19px]" {...op}><circle cx="5.500" cy="6" r="4" /><circle cx="18.500" cy="18" r="4" /><path d="M20 1L4 23" /></svg>, 1],
  [<T w={19} className="mt-[3px] text-[17.500px]">CE</T>, 1], [<T w={10} className="mt-[3px] text-[17.500px]">C</T>, 1], [<Delete className="size-[20px]" strokeWidth={1.700} />, 1],
  [<span className="flex items-center font-['Liberation_Serif'] leading-none"><span className="-mt-[7px] font-['Open_Sans'] text-[11px]">1</span><span className="-mx-px text-[19px]">/</span><i className="text-[21px]">x</i></span>, 1],
  [<span className="flex items-start font-['Liberation_Serif'] text-[22px] leading-none"><i>x</i><span className="-mt-px ml-[3px] font-['Open_Sans'] text-[12px] leading-none">2</span></span>, 1],
  [<span className="flex items-start font-['Liberation_Serif'] text-[19px] leading-none"><span className="-mr-[4px] -mt-[2px] font-['Open_Sans'] text-[11px] leading-none">2</span><span>√</span><i className="mt-px border-t border-[#1b1b1b] leading-[15px]">x</i></span>, 1],
  [<svg viewBox="0 0 24 24" className="size-[20px]" {...op}><path d="M1 12h22M11 5h2M11 19h2" strokeWidth="1.800" /></svg>, 1],
  ["7"], ["8"], ["9"], [<X className="size-[20px]" strokeWidth={1.400} />, 1],
  ["4"], ["5"], ["6"], [<svg viewBox="0 0 24 24" className="size-[20px]" {...op}><path d="M3 12h18" /></svg>, 1],
  ["1"], ["2"], ["3"], [<svg viewBox="0 0 24 24" className="size-[20px]" {...op}><path d="M3 12h18M12 3v18" /></svg>, 1],
  [<svg viewBox="0 0 24 20" className="h-[18px] w-[22px]" {...op}><path d="M1 5h8M5 1v8M14 2L8 18M14 16h9" /></svg>],
  ["0"], ["."], [<svg viewBox="0 0 24 24" className="size-[20px]" fill="none" stroke="#fff" strokeWidth="1.700"><path d="M1 7h22M1 16h22" /></svg>, 2],
];
const tones = ["border border-[#e3e4e9] border-b-[#c8c9ce] bg-white", "border border-[#e3e4e9] border-b-[#c8c9ce] bg-[#f8fafd]", "bg-[#0067c0]"];

function Calculator() {
  return (
    <div className="absolute left-[1367px] top-[308px] flex h-[690px] w-[762px] flex-col rounded-[10px] border border-[#a9aab0] bg-[#f1f3f8] text-[#1b1b1b] shadow-[0_22px_42px_rgba(0,0,0,0.36),0_0_26px_rgba(0,0,0,0.2)]">
      <div className="flex h-[40px] shrink-0 items-center">
        <Svg vb="0 0 16 20" className="ml-[23px] h-[20px] w-[15px]"><rect width="16" height="20" rx="1" fill="#6b7480" /><path fill="#35c5ec" d="M2 1.500h12v3.500H2z" /><path fill="#c9d2da" d="M2 7h3v3H2zM6.500 7h3v3h-3zM2 11h3v3H2zM6.500 11h3v3h-3zM2 15h3v3H2zM6.500 15h3v3h-3zM11 7h3v3h-3z" /><path fill="#0f4a90" d="M11 11h3v7h-3z" /></Svg>
        <T w={68} className="ml-[20px] mt-[3px] text-[15px]">Calculator</T>
        <Minus className="ml-auto size-[17px]" strokeWidth={2} />
        <Square className="ml-[41px] size-[15px]" strokeWidth={2.200} />
        <X className="ml-[40px] mr-[19px] size-[19px]" strokeWidth={1.800} />
      </div>
      <div className="flex min-h-0 flex-1">
        <div className="flex w-[436px] shrink-0 flex-col">
          <div className="flex h-[62px] items-center">
            <Menu className="ml-[17px] size-[25px]" strokeWidth={1.400} />
            <T w={102} className="ml-[16px] text-[24.500px] font-semibold">Standard</T>
            <Svg className="ml-[24px] size-[19px]"><path stroke="#1b1b1b" strokeWidth="1.700" d="M1 11V5q0-4 4-4h14q4 0 4 4v14q0 4-4 4h-5M13 1v8q0 2 2 2h8M1 23l9-9M3 14h7v7" /></Svg>
          </div>
          <div className="flex h-[104px] items-center justify-end pr-[17px] pt-[38px]"><T w={31} className="text-[57px] font-semibold leading-[66px] text-black">0</T></div>
          <div className="flex h-[66px] items-center pl-[4px] pb-[13px] pt-[33px] text-[15px]">
            <T w={23} className="ml-[29px] text-[#9c9da3]">MC</T><T w={23} className="ml-[62px] text-[#9c9da3]">MR</T>
            <T w={24} className="ml-[63px]">M+</T><T w={23} className="ml-[61px]">M−</T><T w={23} className="ml-[63px]">MS</T>
          </div>
          <div className="ml-[5px] grid w-[425px] grid-cols-4 gap-x-[3.500px] gap-y-[3px]">
            {keys.map(([k, t = 0], i) => (
              <div key={i} className={"flex h-[66px] items-center justify-center rounded-[5px] text-[22px] " + tones[t]}>
                {typeof k === "string" ? <span className="mt-[4px] scale-x-[0.930]">{k}</span> : k}
              </div>
            ))}
          </div>
        </div>
        <div className="ml-[13px] flex flex-col text-[17.500px]">
          <div className="flex h-[40px] items-center pt-[18px]"><T w={55}>History</T><T w={65} className="ml-[30px]">Memory</T></div>
          <span className="ml-[18px] mt-[9px] h-[4px] w-[20px] rounded-full bg-[#0067c0]" />
          <T w={169} className="mt-[27px]">There’s no history yet.</T>
        </div>
      </div>
    </div>
  );
}

/* ---------- taskbar ---------- */

const office = (dark, light, letter) => (
  <div className="relative h-[29px] w-[29px]">
    <Svg className="size-[29px]"><rect x="7" width="17" height="24" rx="1.500" fill={light} /><path fill={dark} d="M7 12h17v10q0 2-2 2H7z" /><rect y="7" width="13" height="13" rx="1.500" fill={dark} /></Svg>
    <span className="absolute left-[3px] top-[7px] text-[13px] font-bold leading-[18px] text-white">{letter}</span>
  </div>
);

const apps = [
  [<Svg className="size-[29px]"><path fill="#1d1d1d" d="M0 9h18v15H0z" /><path fill="#f4f4f4" d="M7 0h17v17H7z" /><path fill="#a9a9a9" d="M7 9h11v8H7z" /></Svg>],
  [<Svg className="size-[29px]"><path fill="#5b5fc7" d="M12 0a12 12 0 1 1 0 24H0V12A12 12 0 0 1 12 0z" /><path fill="#fff" d="M5 7h9v10H5zM15 10l4-3v10l-4-3z" /></Svg>],
  [office("#1b5cbe", "#41a5ee", "W")],
  [office("#0f78d4", "#30b4f0", "O")],
  [<Svg className="size-[29px]"><path fill="#e0a010" d="M0 3q0-2 2-2h6l3 3v5H0z" /><path fill="#ffcf4a" d="M0 6h11l2-2h11v18H0z" /><path fill="#1683d0" d="M4 17h16v7H4z" /></Svg>, "dot"],
  [<Svg className="size-[28px]"><rect x="1" width="22" height="24" rx="1.500" fill="#343434" /><path fill="#ffd90f" d="M13 22v-9h9z" /></Svg>],
  [<Svg className="size-[30px]"><circle cx="12" cy="12" r="12" fill="#fff" /><g strokeWidth="3" strokeLinecap="round"><path stroke="#36c5f0" d="M5 9.500h5M9.500 5v1" /><path stroke="#2eb67d" d="M14 4v6M19 9.500h-1" /><path stroke="#ecb22e" d="M14 14.500h5M14.500 19v-1" /><path stroke="#e01e5a" d="M9.500 14v5M5 14.500h1" /></g></Svg>],
  [<Svg className="size-[28px]"><path fill="#5b7ce8" d="M12 0L2 6v12l8 2V8l6-4z" /><path fill="#8e55d8" d="M2 18l10 6 10-6v-5l-10 5z" /><path fill="#2b48b8" d="M12 0l10 6v9l-6 2V8z" /></Svg>],
  [<Svg className="size-[30px]"><circle cx="12" cy="12" r="12" fill="#1b8bd6" /><path fill="#48c8a0" d="M3 6q8-10 18 0 4 6 0 9-4 2-7-1 2-6-3-8T3 9z" /><path fill="#fff" opacity=".6" d="M10 13q0 7 9 7-6 4-11-1z" /><path fill="#b96a15" d="M0 15h13v9H0z" /></Svg>],
  [<Svg className="size-[29px]"><circle cx="12" cy="13" r="11" fill="#ff7a22" /><path fill="#ffc62d" d="M13 0q10 5 10 14-2-7-6-8zM2 6l3-4 1 5z" /><path fill="#f8364c" d="M1 12q-1 10 11 12 7-1 9-6-10 6-14-1z" /><circle cx="13" cy="13" r="5" fill="#7a3ee0" /></Svg>],
  [<Svg className="size-[30px]"><path fill="#ccd3dc" d="M2 1l17-1 3 18-17 1z" /><path fill="#1420c8" d="M4 2l14-1 2 14-13 1z" /><circle cx="18" cy="18" r="5.500" fill="#d6e6d6" /><path stroke="#2f9e3c" strokeWidth="1.500" d="M14.500 16l3 2.500-3 2.500M21 15l-3 2.500 3 2.500" /></Svg>],
  [<Svg className="size-[26px]"><circle cx="12" cy="12" r="12" fill="#fff" /><circle cx="8" cy="12" r="3" stroke="#2a66c8" strokeWidth="2" /><path stroke="#c0392b" strokeWidth="2.200" d="M11 12h4" /><path stroke="#2f9e3c" strokeWidth="2.200" d="M15 12h4v3" /></Svg>],
  [<Svg className="size-[30px]"><circle cx="12" cy="12" r="12" fill="#fbbc05" /><path fill="#ea4335" d="M12 12L1.600 6A12 12 0 0 1 22.400 6z" /><path fill="#34a853" d="M12 12v12A12 12 0 0 1 1.600 6z" /><circle cx="12" cy="12" r="5.800" fill="#fff" /><circle cx="12" cy="12" r="4.600" fill="#4285f4" /></Svg>, "dot"],
  [<TC className="size-[30px]" />, "dot"],
  [<Svg className="h-[30px] w-[24px]"><rect width="24" height="24" rx="1.500" fill="#6d7580" /><path fill="#3cc8f0" d="M3 2.500h18V7H3z" /><path fill="#c4ccd4" d="M3 9h4.500v3.500H3zM9.500 9H14v3.500H9.500zM16.500 9H21v3.500h-4.500zM3 14h4.500v3.500H3zM9.500 14H14v3.500H9.500zM3 19h4.500v3H3zM9.500 19H14v3H9.500z" /><path fill="#0f4a90" d="M16.500 14H21v8h-4.500z" /></Svg>, "active"],
];

function Taskbar({ tray }) {
  return (
    <div className="flex h-[60px] w-[3440px] shrink-0 items-center border-t border-[#aeb3bd] text-[15px] text-[#1b1b1b] [background-image:linear-gradient(90deg,#d5dbe6_0%,#d6dce8_13%,#d8e1fb_17%,#d7e2fb_21%,#dadbf5_27%,#d3e8fd_32%,#d9dbf6_36%,#d5e2fb_40%,#d9dbf2_44%,#d8dae3_55%,#dadbee_66%,#d5dbe6_75%,#d5dbe6_100%)]">
      <div className="relative ml-[25px] h-[34px] w-[40px] shrink-0">
        <Svg className="mt-[12px] h-[20px] w-[30px]"><path fill="#a9cdf8" d="M5 23Q0 22 0 16q0-6 5-7 3-10 10-8 5 2 5 8 4 1 4 7t-5 7z" /><path fill="#86b5f3" d="M5 23Q0 22 0 17h24q0 5-5 6z" /></Svg>
        <span className="absolute left-[14px] top-[1px] flex size-[20px] items-center justify-center rounded-full bg-[#c42b1c] text-[13px] text-white">1</span>
      </div>
      <div className="flex w-[60px] shrink-0 flex-col leading-[20px]"><T w={29}>19°C</T><T w={47} className="text-[#5a5d64]">Cloudy</T></div>
      <Svg className="ml-[1027px] size-[29px]"><path fill="#1aa3ee" d="M0 0h11.500v11.500H0zM12.500 0H24v11.500H12.500z" /><path fill="#0a7cd8" d="M0 12.500h11.500V24H0zM12.500 12.500H24V24H12.500z" /></Svg>
      <div className="ml-[18px] flex h-[39px] w-[272px] shrink-0 items-center rounded-full border border-[#c5cbdc] bg-[#f3f6fc]">
        <Search className="ml-[12px] size-[20px]" strokeWidth={2.200} />
        <T w={51} className="ml-[11px] text-[17px] text-[#55585f]">Search</T>
        <div className="ml-auto mr-[2px] flex h-[34px] w-[65px] items-center justify-center gap-[2px] rounded-[14px] bg-[#05293b] text-white"><Bear className="h-[7px] w-[12px]" /><T w={41} className="font-['Roboto'] text-[8px] font-bold tracking-wide">SMARTBEAR</T></div>
      </div>
      <div className="ml-[4px] flex">
        {apps.map(([icon, state], i) => (
          <div key={i} className="flex w-[55px] justify-center">
            <div className={"flex h-[48px] w-[48px] flex-col items-center rounded-[5px] pt-[8px] " + (state === "active" ? "border border-[#dcdde8] bg-[#eeeff8]" : "")}>
              <span className="flex h-[32px] items-center">{icon}</span>
              {state === "dot" && <span className="mt-[4px] h-[4px] w-[8px] rounded-full bg-[#7b7e88]" />}
              {state === "active" && <span className="mt-[2px] h-[4px] w-[20px] shrink-0 rounded-full bg-[#0a78d4]" />}
            </div>
          </div>
        ))}
      </div>
      {tray && (
        <>
          <ChevronUp className="ml-auto size-[19px]" strokeWidth={2.200} />
          <div className="relative ml-[21px] size-[22px]"><RefreshCw className="size-[22px]" strokeWidth={1.600} /><span className="absolute bottom-0 right-0 size-[10px] rounded-full bg-[#fb9a0a]" /></div>
          <div className="ml-[22px] flex w-[30px] flex-col items-center leading-[20px]"><T w={28}>ENG</T><T w={18}>US</T></div>
          <Svg className="ml-[21px] size-[20px]"><path stroke="#1b1b1b" strokeWidth="2" d="M16 2H2v18h14V11M5 23h10M17 3h6v5q0 2-3 2t-3-2zM20 10v13" /></Svg>
          <Volume2 className="ml-[9px] size-[22px]" strokeWidth={1.600} />
          <BatteryCharging className="ml-[7px] size-[25px] fill-[#1b1b1b]" strokeWidth={1.600} />
        </>
      )}
      <div className={"flex w-[77px] flex-col items-end leading-[20px] " + (tray ? "ml-[17px]" : "ml-auto mr-[27px]")}><T w={54}>3:06 PM</T><T w={77}>11/09/2024</T></div>
      {tray && <Svg className="ml-[10px] mr-[27px] size-[19px]"><path fill="#1b1b1b" d="M3 17V8q0-7 8-7h5l6-1v8l-2 3v6l2 2H0zM7 21h8q-1 3-4 3t-4-3z" /><path stroke="#fff" strokeWidth="1.500" d="M8 8h5l-5 6h5M16 3h4l-4 4h4" /></Svg>}
    </div>
  );
}

export default function App() {
  return (
    <div className="h-[857px] w-[4096px] overflow-hidden bg-white">
      <div className="flex h-[1440px] w-[6880px] font-['Open_Sans',sans-serif] leading-normal [zoom:0.59535]">
        <div className="flex w-[3440px] shrink-0 flex-col"><Browser /><Taskbar tray /></div>
        <div className="relative flex w-[3440px] shrink-0 flex-col"><Explorer /><Calculator /><Taskbar /></div>
      </div>
    </div>
  );
}
